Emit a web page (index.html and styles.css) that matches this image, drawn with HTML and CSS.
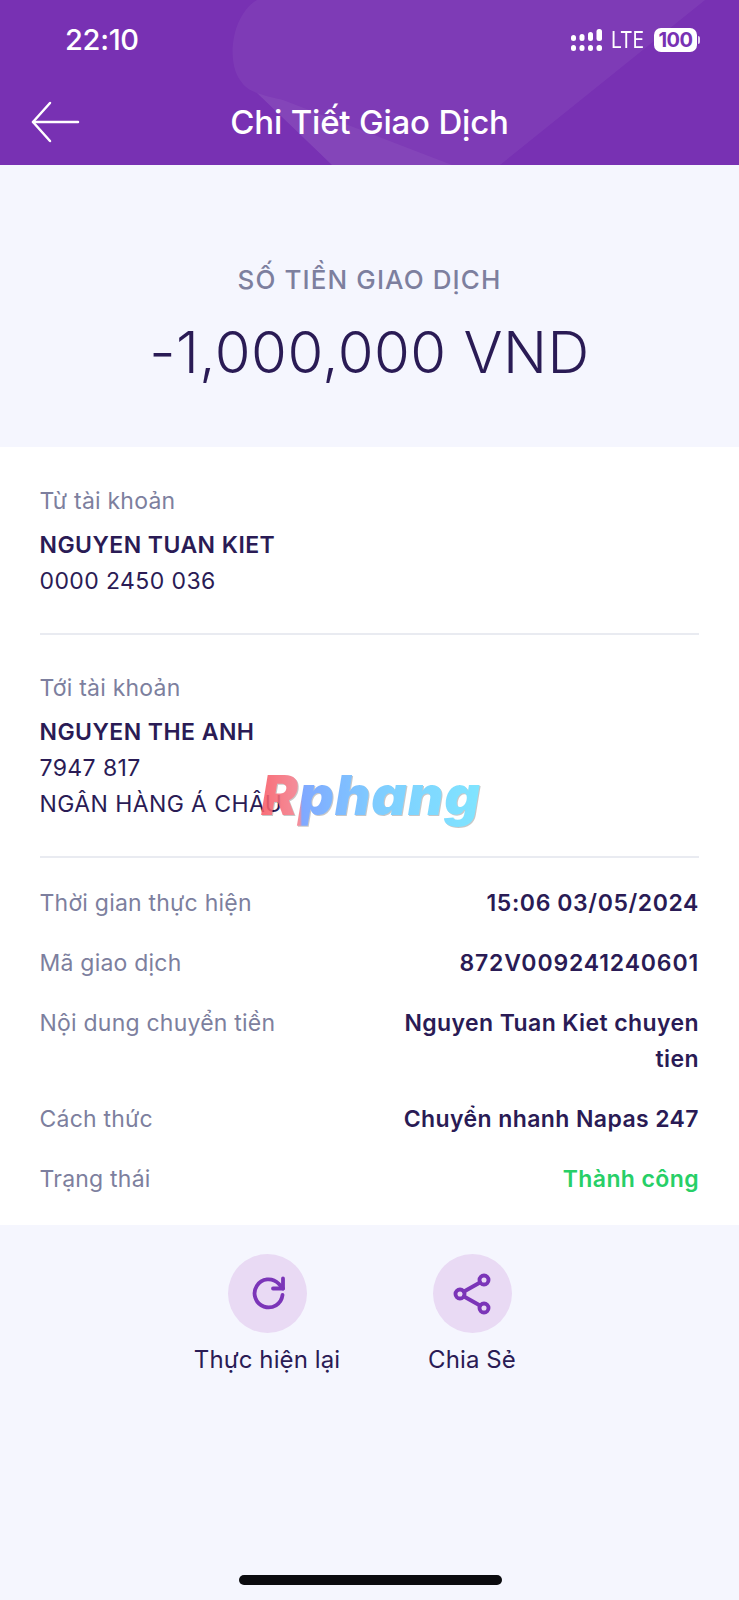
FILE: index.html
```html
<!DOCTYPE html>
<html lang="vi">
<head>
    <meta charset="UTF-8">
    <meta name="viewport" content="width=device-width, initial-scale=1.0">
    <title>Chi Tiết Giao Dịch</title>
    <link rel="stylesheet" href="styles.css">
</head>
<body>
    <div class="screen">
        <header class="top">
            <svg class="top-bg" width="739" height="165" viewBox="0 0 739 165">
                <path d="M257 0 C232 15 226 60 240 80 C245 88 250 90 257 93 L332 165 L500 165 L705 0 Z" fill="#fff" fill-opacity="0.05"/>
                <path d="M257 93 C268 97 276 98 283 100 L452 165 L332 165 Z" fill="#fff" fill-opacity="0.05"/>
            </svg>
            <div class="status">
                <span class="clock">22:10</span>
                <div class="status-right">
                    <svg class="signal" width="31" height="23" viewBox="0 0 31 23" fill="#fff">
                        <rect x="0" y="6" width="5" height="6" rx="2.500"/>
                        <rect x="8.500" y="5" width="5" height="7" rx="2.500"/>
                        <rect x="17" y="3" width="5" height="9" rx="2.500"/>
                        <rect x="25.500" y="0" width="5.500" height="12" rx="2.500"/>
                        <rect x="0" y="16" width="5" height="6" rx="2.500"/>
                        <rect x="8.500" y="16" width="5" height="6" rx="2.500"/>
                        <rect x="17" y="16" width="5" height="6" rx="2.500"/>
                        <rect x="25.500" y="16" width="5.500" height="6" rx="2.500"/>
                    </svg>
                    <span class="lte">LTE</span>
                    <span class="battery">100</span>
                    <span class="battery-tip"></span>
                </div>
            </div>
            <div class="nav">
                <svg class="back" width="50" height="42" viewBox="0 0 50 42" fill="none" stroke="#fff" stroke-width="2.500" stroke-linecap="round" stroke-linejoin="round">
                    <path d="M19 2 L2 21 L19 40"/>
                    <path d="M2 21 H47"/>
                </svg>
                <h1 class="title">Chi Tiết Giao Dịch</h1>
            </div>
        </header>

        <section class="hero">
            <div class="hero-label">SỐ TIỀN GIAO DỊCH</div>
            <div class="hero-amount">-1,000,000 VND</div>
        </section>

        <section class="card">
            <div class="account">
                <div class="label">Từ tài khoản</div>
                <div class="name">NGUYEN TUAN KIET</div>
                <div class="plain">0000 2450 036</div>
            </div>
            <div class="account">
                <div class="label">Tới tài khoản</div>
                <div class="name">NGUYEN THE ANH</div>
                <div class="plain">7947 817</div>
                <div class="plain">NGÂN HÀNG Á CHÂU</div>
            </div>
            <div class="details">
                <div class="row">
                    <div class="label">Thời gian thực hiện</div>
                    <div class="value value-date">15:06 03/05/2024</div>
                </div>
                <div class="row">
                    <div class="label">Mã giao dịch</div>
                    <div class="value value-code">872V009241240601</div>
                </div>
                <div class="row">
                    <div class="label">Nội dung chuyển tiền</div>
                    <div class="value value-wrap">Nguyen Tuan Kiet chuyen tien</div>
                </div>
                <div class="row">
                    <div class="label">Cách thức</div>
                    <div class="value">Chuyển nhanh Napas 247</div>
                </div>
                <div class="row">
                    <div class="label">Trạng thái</div>
                    <div class="value success">Thành công</div>
                </div>
            </div>
        </section>

        <section class="actions">
            <div class="action">
                <div class="action-icon">
                    <svg class="icon-redo" width="34" height="34" viewBox="0 0 34 34" fill="none" stroke="#7b35b8" stroke-width="3.800" stroke-linecap="round" stroke-linejoin="round">
                        <path d="M30.500 19 A14 14 0 1 1 26.500 7.500 L31 12.500"/>
                        <path d="M31 2.500 V12.500 H21"/>
                    </svg>
                </div>
                <div class="action-text">Thực hiện lại</div>
            </div>
            <div class="action">
                <div class="action-icon">
                    <svg width="38" height="42" viewBox="0 0 38 42" fill="none" stroke="#7b35b8" stroke-width="3.900" stroke-linecap="round">
                        <circle cx="7" cy="21" r="4.500"/>
                        <circle cx="31" cy="7" r="4.500"/>
                        <circle cx="31" cy="35" r="4.500"/>
                        <path d="M11 18.500 L27 9.500"/>
                        <path d="M11 23.500 L27 32.500"/>
                    </svg>
                </div>
                <div class="action-text">Chia Sẻ</div>
            </div>
        </section>

        <div class="watermark">Rphang</div>
        <div class="home-bar"></div>
    </div>
</body>
</html>
```

FILE: styles.css
```css
* {
    box-sizing: border-box;
}

body {
    margin: 0;
    padding: 0;
    background-color: #f5f6fe;
    font-family: Inter, "Noto Sans", sans-serif;
    color: #2a1b55;
}

.screen {
    position: relative;
    width: 739px;
    height: 1600px;
    overflow: hidden;
    display: flex;
    flex-direction: column;
}

.top {
    position: relative;
    height: 165px;
    background-color: #7831b3;
    color: #fff;
}

.top-bg {
    position: absolute;
    top: 0;
    left: 0;
}

.status {
    position: relative;
    height: 80px;
    padding: 24px 39px 0 65px;
    display: flex;
    justify-content: space-between;
    align-items: flex-start;
}

.clock {
    font-size: 29px;
    line-height: 32px;
    font-weight: 500;
    letter-spacing: -0.3px;
}

.status-right {
    display: flex;
    align-items: center;
    height: 32px;
}

.signal {
    display: block;
}

.lte {
    margin-left: 9px;
    font-size: 23px;
    font-weight: 400;
    transform: scaleX(0.84);
    transform-origin: left center;
    width: 43px;
}

.battery {
    width: 43px;
    height: 24px;
    border-radius: 7px;
    background-color: #fff;
    color: #7831b3;
    font-size: 20px;
    line-height: 24px;
    font-weight: 700;
    text-align: center;
    letter-spacing: -0.5px;
}

.battery-tip {
    width: 2px;
    height: 8px;
    margin-left: 1px;
    background-color: #e4d4f0;
    border-radius: 0 2px 2px 0;
}

.nav {
    position: relative;
    height: 85px;
    display: flex;
    align-items: center;
    justify-content: center;
}

.back {
    position: absolute;
    left: 31px;
    top: 21px;
}

.title {
    margin: -2px 0 0;
    font-size: 33px;
    font-weight: 500;
    letter-spacing: -0.2px;
}

.hero {
    height: 282px;
    padding-top: 97px;
    text-align: center;
}

.hero-label {
    font-size: 26px;
    line-height: 36px;
    font-weight: 500;
    letter-spacing: 1.1px;
    color: #7d7f9e;
}

.hero-amount {
    margin-top: 20px;
    font-size: 58px;
    line-height: 68px;
    font-weight: 300;
    letter-spacing: 0.5px;
    color: #2a1b55;
}

.card {
    height: 778px;
    padding: 0 40px 0 39.500px;
    background-color: #fff;
    font-size: 23px;
}

.account {
    padding-top: 36px;
    border-bottom: 2px solid #e9ebf1;
}

.account:nth-child(1) {
    height: 188px;
}

.account:nth-child(2) {
    height: 223px;
    padding-top: 35px;
}

.label {
    line-height: 36px;
    letter-spacing: 0.22px;
    color: #7d7f9e;
}

.name {
    margin-top: 8px;
    line-height: 36px;
    font-weight: 600;
    letter-spacing: 0.45px;
}

.plain {
    line-height: 36px;
    letter-spacing: 0.4px;
}

.details {
    padding-top: 27px;
}

.row {
    display: flex;
    justify-content: space-between;
    margin-bottom: 24px;
}

.value {
    line-height: 36px;
    font-weight: 600;
    text-align: right;
    letter-spacing: 0.4px;
}

.value-date {
    letter-spacing: 0.6px;
}

.value-code {
    letter-spacing: 0.85px;
}

.value-wrap {
    width: 300px;
}

.success {
    color: #27cf67;
}

.actions {
    display: flex;
    justify-content: center;
    padding-top: 29px;
}

.action {
    width: 205px;
    display: flex;
    flex-direction: column;
    align-items: center;
}

.action-icon {
    width: 79px;
    height: 79px;
    border-radius: 50%;
    background-color: #e9daf4;
    display: flex;
    align-items: center;
    justify-content: center;
}

.icon-redo {
    margin: 0 0 2px 3px;
}

.action-text {
    margin-top: 9px;
    font-size: 24px;
    line-height: 36px;
    letter-spacing: 0.1px;
}

.watermark {
    position: absolute;
    left: 261px;
    top: 760px;
    padding-right: 8px;
    font-size: 55px;
    line-height: 70px;
    font-weight: 900;
    font-style: italic;
    letter-spacing: 0.8px;
    background: linear-gradient(90deg, #f95b66 0, #f2808f 17%, #6f9dff 18%, #6ec6ff 50%, #6fe4ff 100%);
    -webkit-background-clip: text;
    background-clip: text;
    color: transparent;
    opacity: 0.88;
    filter: drop-shadow(1px 1px 0 rgba(0, 0, 0, 0.25));
}

.home-bar {
    position: absolute;
    left: 239px;
    top: 1575px;
    width: 263px;
    height: 10px;
    border-radius: 5px;
    background-color: #0b0b0f;
}
```
